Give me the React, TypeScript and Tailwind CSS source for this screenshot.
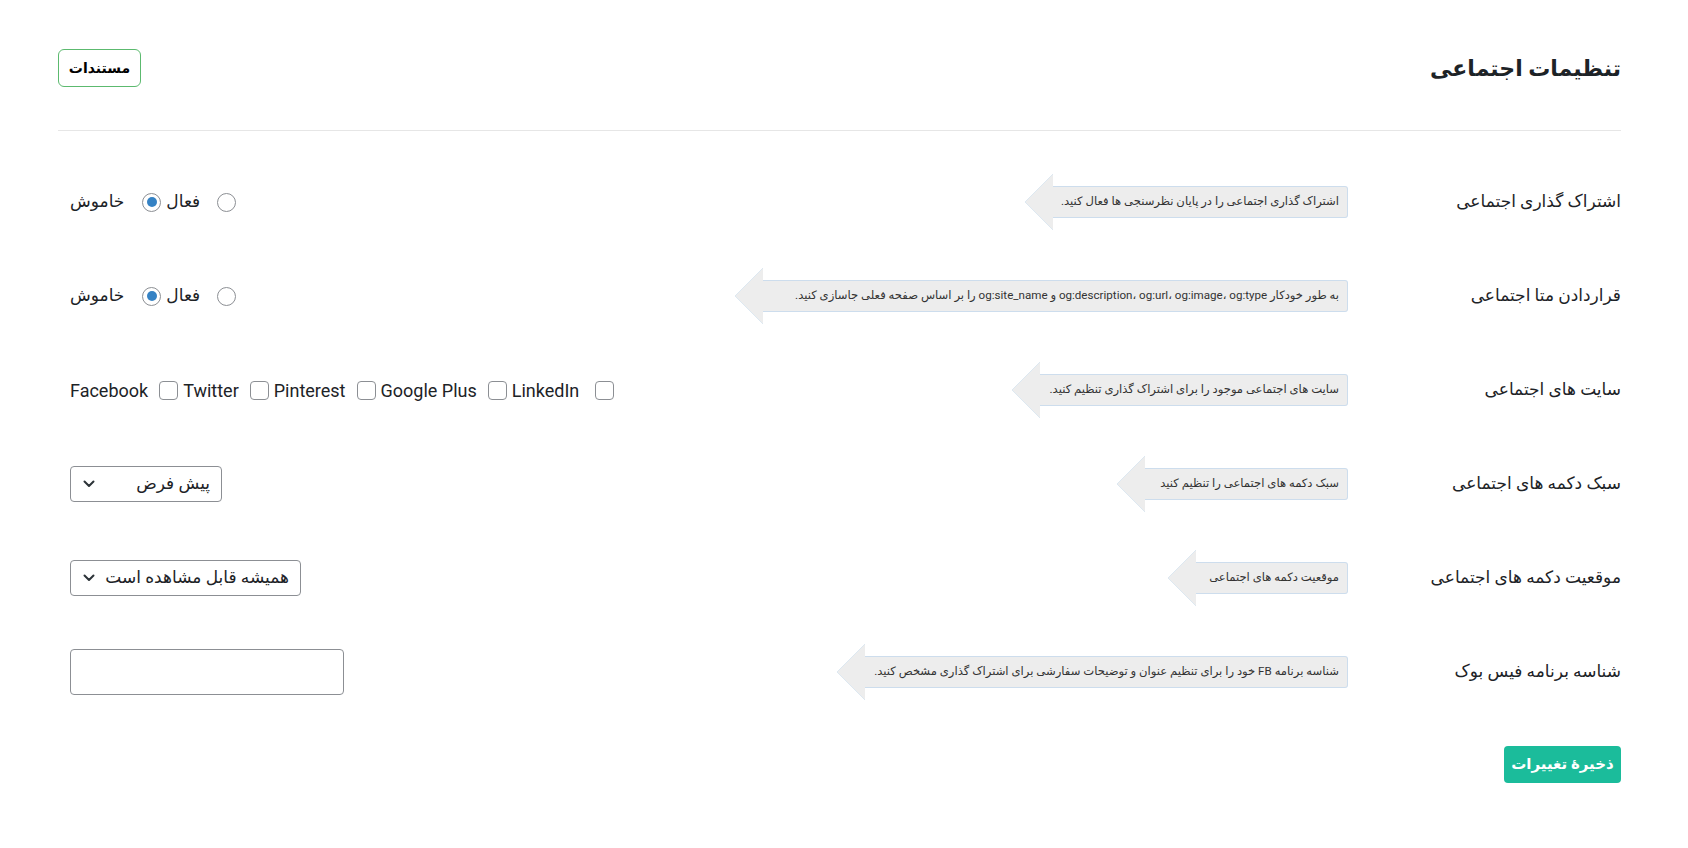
import React from "react"

type Hint = { text: React.ReactNode; width: string }

function Tip({ text, width }: Hint) {
  return (
    <div className="flex items-center">
      <div
        className={`${width} h-[32px] flex items-center justify-start px-2 bg-[#ededed] border border-l-0 border-[#cddded] rounded-r-[3px] text-[11.6px] text-[#333] whitespace-nowrap`}
      >
        {text}
      </div>
      <svg width="28" height="56" viewBox="0 0 28 56" className="shrink-0">
        <polygon points="28,0 0,28 28,56" fill="#ededed" />
        <polyline points="28,0 0,28 28,56" fill="none" stroke="#dde8f1" strokeWidth="1" />
      </svg>
    </div>
  )
}

function Radio({ checked }: { checked?: boolean }) {
  return (
    <span className="w-[19px] h-[19px] rounded-full border border-[#8c8f94] bg-white flex items-center justify-center shrink-0">
      {checked && <span className="w-[10px] h-[10px] rounded-full bg-[#3582c4]" />}
    </span>
  )
}

function Check() {
  return <span className="w-[19px] h-[19px] rounded-[4px] border border-[#8c8f94] bg-white shrink-0" />
}

function Chevron() {
  return (
    <svg width="12" height="8" viewBox="0 0 12 8" className="shrink-0">
      <path d="M1.5 1.5l4.5 4.5 4.5-4.5" fill="none" stroke="#2c3338" strokeWidth="2" strokeLinecap="round" strokeLinejoin="round" />
    </svg>
  )
}

function OnOff() {
  return (
    <div className="flex items-center gap-[5px]">
      <label className="flex items-center gap-[17px]">
        <Radio />
        <span>فعال</span>
      </label>
      <label className="flex items-center gap-[18px]">
        <Radio checked />
        <span>خاموش</span>
      </label>
    </div>
  )
}

function Sites() {
  const sites = ["LinkedIn", "Google Plus", "Pinterest", "Twitter", "Facebook"]
  return (
    <div className="flex items-center gap-[5px]">
      {sites.map((s, i) => (
        <label key={s} className={`flex items-center ${i === 0 ? "gap-[16px]" : "gap-[11px]"}`}>
          <Check />
          <span dir="ltr" className="text-[18px] font-['Roboto',sans-serif]">{s}</span>
        </label>
      ))}
    </div>
  )
}

function Select({ value, width }: { value: string; width: string }) {
  return (
    <div className={`${width} h-[36px] border border-[#8c8f94] rounded-[4px] bg-white flex items-center justify-between pr-[11px] pl-[12px]`}>
      <span>{value}</span>
      <Chevron />
    </div>
  )
}

const rows: { label: string; hint: Hint; control: React.ReactNode }[] = [
  {
    label: "اشتراک گذاری اجتماعی",
    hint: { text: "اشتراک گذاری اجتماعی را در پایان نظرسنجی ها فعال کنید.", width: "min-w-[294px]" },
    control: <OnOff />,
  },
  {
    label: "قراردادن متا اجتماعی",
    hint: {
      text: "به طور خودکار og:description، og:url، og:image، og:type و og:site_name را بر اساس صفحه فعلی جاسازی کنید.",
      width: "min-w-[585px]",
    },
    control: <OnOff />,
  },
  {
    label: "سایت های اجتماعی",
    hint: { text: "سایت های اجتماعی موجود را برای اشتراک گذاری تنظیم کنید.", width: "min-w-[308px]" },
    control: <Sites />,
  },
  {
    label: "سبک دکمه های اجتماعی",
    hint: { text: "سبک دکمه های اجتماعی را تنظیم کنید", width: "min-w-[203px]" },
    control: <Select value="پیش فرض" width="w-[152px]" />,
  },
  {
    label: "موقعیت دکمه های اجتماعی",
    hint: { text: "موقعیت دکمه های اجتماعی", width: "min-w-[152px]" },
    control: <Select value="همیشه قابل مشاهده است" width="w-[231px]" />,
  },
  {
    label: "شناسه برنامه فیس بوک",
    hint: { text: "شناسه برنامه FB خود را برای تنظیم عنوان و توضیحات سفارشی برای اشتراک گذاری مشخص کنید.", width: "min-w-[483px]" },
    control: <div className="w-[274px] h-[46px] border border-[#8c8f94] rounded-[4px] bg-white" />,
  },
]

export default function App() {
  return (
    <div dir="rtl" className="min-h-screen bg-white pl-[58px] pr-[67px] pt-[49px] text-[#1d2327] font-['Roboto','DejaVu_Sans',sans-serif]">
      {/* Header */}
      <div className="flex items-center justify-between h-[38px]">
        <h1 className="text-[22px] font-bold text-[#1d2327]">تنظیمات اجتماعی</h1>
        <button className="w-[83px] h-[38px] border border-[#5cba6f] rounded-[6px] text-[14px] font-bold text-black">
          مستندات
        </button>
      </div>
      <div className="mt-[43px] h-px bg-[#e6e6e6]" />

      {/* Settings */}
      <div className="pt-[24px] pl-3 text-[17px]">
        {rows.map((r) => (
          <div key={r.label} className="flex items-center h-[94px]">
            <div className="w-[273px] shrink-0 text-[17px] text-[#1d2327]">{r.label}</div>
            <Tip {...r.hint} />
            <div className="mr-auto">{r.control}</div>
          </div>
        ))}
      </div>

      <div className="mt-[27px] flex">
        <button className="w-[117px] h-[37px] rounded-[4px] bg-[#1bbc9b] text-white text-[15px] font-bold">
          ذخیرهٔ تغییرات
        </button>
      </div>
    </div>
  )
}
